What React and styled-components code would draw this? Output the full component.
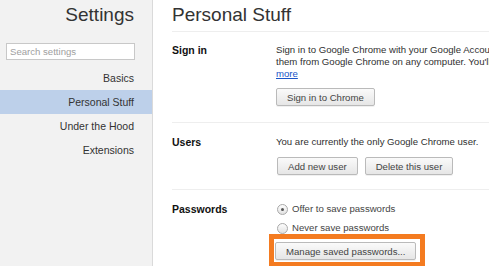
import React from 'react'
import styled, { createGlobalStyle } from 'styled-components'

const GlobalStyle = createGlobalStyle`
  html, body {
    margin: 0;
    padding: 0;
    background: #fff;
    overflow: hidden;
  }

  body {
    font-family: 'Liberation Sans', Arial, sans-serif;
    color: #303030;
  }
`

const Page = styled.div`
  display: flex;
  width: 489px;
  height: 266px;
  overflow: hidden;
`

const Sidebar = styled.nav`
  flex: 0 0 152px;
  background: #f2f2f2;
  border-right: 1px solid #dadada;
`

const SideTitle = styled.h1`
  margin: 0;
  padding: 4px 18px 0 0;
  font-size: 19px;
  font-weight: normal;
  line-height: 22px;
  text-align: right;
  color: #333;
`

const Search = styled.input`
  display: block;
  box-sizing: border-box;
  width: 129px;
  height: 17px;
  margin: 17px 0 6px 6px;
  padding: 0 3px;
  border: 1px solid #c8c8c8;
  background: #fff;
  font-family: inherit;
  font-size: 9.6px;
  outline: none;

  &::placeholder {
    color: #a0a0a0;
  }
`

const NavItem = styled.div`
  height: 24px;
  line-height: 24px;
  padding-right: 18px;
  text-align: right;
  font-size: 10.5px;
  color: #333;
  background: ${props => (props.selected ? '#bdd0ea' : 'transparent')};
`

const Main = styled.main`
  flex: 1;
  min-width: 0;
  padding-left: 19px;
  white-space: nowrap;
`

const Title = styled.h1`
  margin: 0;
  padding: 4px 0 5px;
  font-size: 19px;
  font-weight: normal;
  line-height: 22px;
  color: #333;
  border-bottom: 1px solid #eeeeee;
`

const Section = styled.section`
  display: flex;
  padding: ${props => props.pad || '13px 0 14px'};
  border-bottom: ${props => (props.last ? 'none' : '1px solid #eeeeee')};
`

const Label = styled.h3`
  flex: 0 0 104px;
  margin: 0;
  font-size: 10.5px;
  line-height: 12px;
  color: #111;
`

const Body = styled.div`
  display: flex;
  flex-direction: column;
  align-items: flex-start;
  font-size: 9.6px;
  line-height: 12px;
`

const More = styled.a`
  color: #1a55c8;
  text-decoration: underline;
`

const Buttons = styled.div`
  display: flex;
  gap: 7px;
  margin-top: ${props => props.top || '9px'};
  padding-left: ${props => props.indent || '0'};
`

const Button = styled.button`
  box-sizing: border-box;
  height: 18px;
  padding: 0 10px;
  border: 1px solid #bababa;
  border-radius: 2px;
  background: linear-gradient(#fafafa, #e6e6e6);
  box-shadow: 0 1px 0 rgba(0, 0, 0, 0.06);
  font-family: inherit;
  font-size: 9.6px;
  color: #444;
`

const Radios = styled.div`
  display: flex;
  flex-direction: column;
  gap: 7px;
  padding-left: 1px;
`

const RadioRow = styled.label`
  display: flex;
  align-items: center;
  gap: 4px;
  height: 12px;
  color: #444;
`

const Radio = styled.span`
  position: relative;
  box-sizing: border-box;
  width: 11px;
  height: 11px;
  border: 1px solid #a9a9a9;
  border-radius: 50%;
  background: linear-gradient(#fdfdfd, #e2e2e2);

  &::after {
    content: '';
    display: ${props => (props.checked ? 'block' : 'none')};
    position: absolute;
    left: 3px;
    top: 3px;
    width: 3px;
    height: 3px;
    border-radius: 50%;
    background: #555;
  }
`

const Highlight = styled.div`
  margin-left: -7px;
  padding: 3px 4px 2px 1px;
  border: 5px solid #f47b20;
`

const signInText = [
  'Sign in to Google Chrome with your Google Account to save your personalized browser features to the web and access',
  "them from Google Chrome on any computer. You'll also be automatically signed in to your favorite Google services. Learn"
]

export default function App () {
  return (
    <Page>
      <GlobalStyle />
      <Sidebar>
        <SideTitle>Settings</SideTitle>
        <Search placeholder='Search settings' />
        <NavItem>Basics</NavItem>
        <NavItem selected>Personal Stuff</NavItem>
        <NavItem>Under the Hood</NavItem>
        <NavItem>Extensions</NavItem>
      </Sidebar>

      <Main>
        <Title>Personal Stuff</Title>

        <Section pad='12px 0 16px'>
          <Label>Sign in</Label>
          <Body>
            {signInText.map(line => (
              <span key={line}>{line}</span>
            ))}
            <More href='#'>more</More>
            <Buttons top='8px'>
              <Button>Sign in to Chrome</Button>
            </Buttons>
          </Body>
        </Section>

        <Section>
          <Label>Users</Label>
          <Body>
            <span>You are currently the only Google Chrome user.</span>
            <Buttons indent='1px'>
              <Button>Add new user</Button>
              <Button>Delete this user</Button>
            </Buttons>
          </Body>
        </Section>

        <Section last>
          <Label>Passwords</Label>
          <Body>
            <Radios>
              <RadioRow>
                <Radio checked />
                Offer to save passwords
              </RadioRow>
              <RadioRow>
                <Radio />
                Never save passwords
              </RadioRow>
            </Radios>
            <Highlight>
              <Button>Manage saved passwords...</Button>
            </Highlight>
          </Body>
        </Section>
      </Main>
    </Page>
  )
}
